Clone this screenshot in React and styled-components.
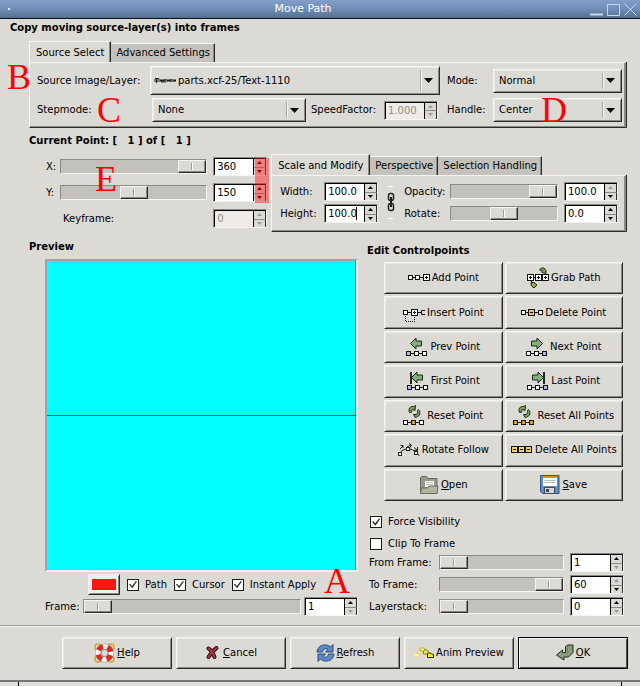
import React from "react";
import styled, { createGlobalStyle, css } from "styled-components";

const c = {
  bg: "#dcdad5",
  trough: "#c3c1bc",
  tab: "#c4c2bd",
  light: "#f5f4f2",
  mid: "#8b8984",
  dark: "#2a2a28",
};

const Global = createGlobalStyle`
  * { box-sizing: border-box; }
  body {
    margin: 0;
    background: ${c.bg};
    color: #000;
    font: 10px/12px "DejaVu Sans", sans-serif;
  }
  button, input, select { font: inherit; color: inherit; margin: 0; border-radius: 0; }
`;

const raised = css`
  border: 1px solid;
  border-color: ${c.light} ${c.dark} ${c.dark} ${c.light};
  box-shadow: inset 1px 1px #eae9e5, inset -1px -1px ${c.mid};
`;

/* ---------- window frame ---------- */

const Window = styled.div`
  position: relative;
  display: flex;
  flex-direction: column;
  min-height: 100vh;
  overflow: hidden;
`;

const TitleBar = styled.header`
  display: grid;
  grid-template-columns: auto 1fr auto;
  column-gap: 3px;
  align-items: center;
  height: 19px;
  padding: 0 3px 0 8px;
  border-bottom: 1px solid #0b1020;
  background: linear-gradient(#829fca, #7390ba 45%, #55708f);
  color: #fff;
`;

const Title = styled.h1`
  margin: 0;
  padding-left: 6px;
  text-align: center;
  font-size: 11px;
  line-height: 18px;
  font-weight: 400;
`;

const Dot = styled.span`
  width: 2px;
  height: 2px;
  background: #e6edf6;
`;

const WindowButtons = styled.div`
  display: flex;
  justify-content: flex-end;
  gap: 4px;
`;

const WindowButton = styled.button`
  display: flex;
  padding: 0;
  border: 0;
  background: none;
`;

const Heading = styled.h2`
  margin: 0;
  font-size: 10px;
  line-height: 12px;
  font-weight: 700;
`;

const PointHeading = styled(Heading)`
  padding-top: 7px;
`;

const Main = styled.main`
  display: flex;
  flex-direction: column;
  padding: 3px 14px 0 10px;
`;

const Body = styled.div`
  display: flex;
  flex-direction: column;
  padding: 7px 0 0 19px;
`;

/* ---------- notebook ---------- */

const Notebook = styled.section`
  display: flex;
  flex-direction: column;
`;

const Tabs = styled.div`
  display: flex;
  align-items: flex-end;
  height: 21px;
`;

const Tab = styled.button`
  height: ${(p) => (p.$active ? 22 : 19)}px;
  margin-bottom: ${(p) => (p.$active ? -1 : 0)}px;
  padding: 0 ${(p) => (p.$active ? 6 : 4)}px;
  border: 1px solid;
  border-color: ${c.light} ${c.dark} transparent ${(p) => (p.$active ? c.light : c.tab)};
  border-bottom: 0;
  background: ${(p) => (p.$active ? c.bg : c.tab)};
  box-shadow: inset -1px 0 ${c.mid};
  white-space: nowrap;
`;

const Panel = styled.div`
  display: flex;
  flex-direction: column;
  gap: 3px;
  padding: 3px 3px 5px 7px;
  border: 1px solid;
  border-color: ${c.light} ${c.mid} ${c.dark} ${c.light};
  box-shadow: inset -1px -1px ${c.mid}, 1px 0 ${c.dark};
`;

const Row = styled.div`
  display: flex;
  align-items: center;
  gap: ${(p) => p.$gap || 0}px;
`;

const Label = styled.label`
  flex: none;
  width: ${(p) => (p.$w ? p.$w + "px" : "auto")};
  white-space: nowrap;
`;

const Gap = styled.span`
  flex: none;
  width: ${(p) => p.$w}px;
`;

/* ---------- combo box ---------- */

const ComboFrame = styled.span`
  ${raised}
  display: grid;
  grid-template-columns: auto 1fr 19px;
  align-items: center;
  flex: ${(p) => (p.$w ? "none" : "1 1 0")};
  width: ${(p) => (p.$w ? p.$w + "px" : "auto")};
  min-width: 0;
  height: ${(p) => p.$h || 24}px;
  padding-left: ${(p) => p.$indent || 5}px;
`;

const ComboSelect = styled.select`
  grid-area: 1 / 2 / 2 / 4;
  width: 100%;
  height: 100%;
  padding: 0;
  border: 0;
  appearance: none;
  background: none;
  outline: none;
`;

const ComboArrow = styled.span`
  grid-area: 1 / 3;
  display: flex;
  align-items: center;
  height: calc(100% - 6px);
  padding-left: 3px;
  border-left: 1px solid #aaa8a3;
  box-shadow: inset 1px 0 ${c.light};
  pointer-events: none;
`;

const Combo = ({ id, w, h, indent, icon, value, options }) => (
  <ComboFrame $w={w} $h={h} $indent={indent}>
    {icon}
    <ComboSelect id={id} defaultValue={value}>
      {(options || [value]).map((o) => (
        <option key={o}>{o}</option>
      ))}
    </ComboSelect>
    <ComboArrow>
      <svg width="9" height="5" viewBox="0 0 9 5">
        <path d="M0 0h9L4.500 5z" />
      </svg>
    </ComboArrow>
  </ComboFrame>
);

/* ---------- spin box ---------- */

const SpinFrame = styled.span`
  display: grid;
  grid-template: 1fr 1fr / 1fr 12px;
  flex: none;
  width: 54px;
  height: 19px;
  border: 1px solid;
  border-color: ${c.mid} ${c.light} ${c.light} ${c.mid};
  color: ${(p) => (p.$off ? "#8f8d88" : "#000")};
`;

const SpinInput = styled.input`
  grid-area: 1 / 1 / 3 / 2;
  min-width: 0;
  width: 100%;
  padding: 0 0 0 2px;
  border: 1px solid #000;
  border-width: 1px 1px 0 1px;
  background: #fff;
  outline: none;
  &:disabled { background: #efebe7; color: #8f8d88; }
`;

const Caret = styled.span`
  grid-area: 1 / 1 / 3 / 2;
  place-self: center end;
  width: 1px;
  height: 13px;
  margin-right: 8px;
  background: #000;
  pointer-events: none;
`;

const SpinStep = styled.button`
  grid-area: ${(p) => (p.$down ? 2 : 1)} / 2;
  display: flex;
  align-items: center;
  justify-content: center;
  padding: 0;
  border: 0;
  border-top: 1px solid ${(p) => (p.$down ? c.mid : "#000")};
  border-right: 1px solid ${c.dark};
  background: ${c.bg};
  color: ${(p) => (p.$dim ? "#9c9a95" : "#000")};
`;

const Spin = ({ id, value, off, dimUp, dimDown, caret }) => (
  <SpinFrame $off={off}>
    <SpinInput id={id} type="text" defaultValue={value} disabled={off} />
    {caret && <Caret />}
    <SpinStep type="button" aria-label="Increase" $dim={off || dimUp}>
      <svg width="5" height="3" viewBox="0 0 5 3"><path d="M0 3h5L2.500 0z" fill="currentColor" /></svg>
    </SpinStep>
    <SpinStep type="button" aria-label="Decrease" $down $dim={off || dimDown}>
      <svg width="5" height="3" viewBox="0 0 5 3"><path d="M0 0h5L2.500 3z" fill="currentColor" /></svg>
    </SpinStep>
  </SpinFrame>
);

/* ---------- slider, check box ---------- */

const Slider = styled.input.attrs({ type: "range" })`
  flex: 1 1 0;
  min-width: 0;
  height: 15px;
  appearance: none;
  border: 1px solid;
  border-color: ${c.mid} ${c.light} ${c.light} ${c.mid};
  background: ${c.trough};
  outline: none;
  &::-webkit-slider-thumb {
    appearance: none;
    width: 28px;
    height: 13px;
    border: 1px solid;
    border-color: ${c.light} ${c.dark} ${c.dark} ${c.light};
    box-shadow: inset -1px -1px ${c.mid};
    background:
      linear-gradient(#9c9a95, #9c9a95) 12px 2px / 1px 7px no-repeat,
      linear-gradient(#fff, #fff) 13px 2px / 1px 7px no-repeat,
      ${c.bg};
  }
`;

const SliderFill = styled.span`
  display: flex;
  flex: 1 1 0;
  min-width: 0;
  padding-right: 6px;
`;

const Check = styled.input.attrs({ type: "checkbox" })`
  display: grid;
  place-items: center;
  flex: none;
  width: 12px;
  height: 12px;
  appearance: none;
  border: 1px solid #1c1c1a;
  background: #fff;
  &:checked::before {
    content: "";
    width: 8px;
    height: 8px;
    background: #333;
    clip-path: polygon(0 50%, 14% 38%, 38% 66%, 86% 6%, 100% 12%, 42% 96%);
  }
`;

const CheckLabel = styled.label`
  display: flex;
  align-items: center;
  gap: 6px;
  white-space: nowrap;
`;

/* ---------- point section ---------- */

const PointRow = styled.div`
  display: grid;
  grid-template-columns: minmax(0, 220fr) minmax(0, 353fr);
  gap: 4px;
  padding: 7px 0 0 17px;
`;

const PointGrid = styled.div`
  position: relative;
  display: grid;
  grid-template-columns: 14px minmax(0, 1fr) 54px;
  grid-template-rows: 19px 19px 19px;
  row-gap: 7px;
  align-content: start;
  align-items: center;
  padding-top: 3px;
`;

const KeyframeLabel = styled.label`
  grid-column: 1 / 3;
  padding-left: 17px;
`;

const Highlight = styled.span`
  position: absolute;
  top: 4px;
  right: -2px;
  width: 14px;
  height: 45px;
  background: rgba(255, 30, 30, 0.48);
  pointer-events: none;
`;

const ModifyPanel = styled(Panel)`
  flex-direction: row;
  align-items: center;
  gap: 9px;
  padding: 6px 7px 8px 8px;
`;

const Stack = styled.div`
  display: flex;
  flex-direction: column;
  gap: 3px;
  flex: ${(p) => (p.$grow ? "1 1 0" : "none")};
  min-width: 0;
`;

const ChainButton = styled.button`
  display: flex;
  padding: 0;
  border: 0;
  background: none;
`;

/* ---------- preview and control points ---------- */

const Columns = styled.div`
  display: grid;
  grid-template-columns: minmax(0, 328fr) minmax(0, 258fr);
  gap: 9px;
  padding-top: 9px;
`;

const PreviewArea = styled.div`
  display: flex;
  flex-direction: column;
  gap: 2px;
  padding: 6px 0 0 16px;
`;

const Canvas = styled.div`
  display: flex;
  flex-direction: column;
  justify-content: center;
  aspect-ratio: 1;
  border: 2px solid;
  border-color: #a5a39e #f0efec #f0efec #a5a39e;
  background: #00ffff;
  box-shadow: inset -1px 0 #8a6a6a;
`;

const CursorLine = styled.hr`
  width: 100%;
  height: 1px;
  margin: 0;
  border: 0;
  background: #f01010;
`;

const ColorButton = styled.button`
  ${raised}
  display: flex;
  width: 32px;
  height: 21px;
  padding: 4px 3px;
`;

const Swatch = styled.span`
  flex: 1;
  align-self: stretch;
  background: #ff1414;
`;

const PathOptions = styled.div`
  display: flex;
  align-items: center;
  gap: 7px;
  padding-left: 43px;
`;

const Controls = styled.div`
  display: flex;
  flex-direction: column;
  padding-top: 4px;
`;

const ButtonGrid = styled.div`
  display: grid;
  grid-template-columns: 1fr 1fr;
  grid-auto-rows: 1fr;
  gap: 2px;
  min-height: 239px;
  margin-top: 5px;
  padding: 0 3px 0 17px;
`;

const PushButton = styled.button`
  ${raised}
  display: flex;
  align-items: center;
  justify-content: center;
  gap: 2px;
  min-width: 0;
  min-height: 32px;
  padding: 0;
  background: ${c.bg};
  white-space: nowrap;
  ${(p) => p.$default && css`border-color: #000; box-shadow: inset 1px 1px ${c.light}, inset -1px -1px #555;`}
`;

const Checks = styled.div`
  display: flex;
  flex-direction: column;
  gap: 10px;
  padding: 15px 0 0 3px;
`;

const FrameRows = styled.div`
  display: flex;
  flex-direction: column;
  gap: 3px;
  padding: 3px 2px 0 2px;
`;

/* ---------- footer ---------- */

const Actions = styled.footer`
  display: grid;
  grid-template-columns: repeat(5, 1fr);
  gap: 4px;
  margin-top: 9px;
  padding: 11px 12px 11px 62px;
  border-top: 1px solid #a19f9a;
  box-shadow: inset 0 1px ${c.light};
`;

const BottomEdge = styled.div`
  display: flex;
  flex: 1;
  min-height: 4px;
  padding: 0 18px;
  border-top: 2px solid #777571;
  background: #e0deda;
`;

const BottomGrip = styled.span`
  flex: 1;
  border: 1px solid #000;
  border-width: 0 1px;
`;

const Mark = styled.span`
  position: absolute;
  left: ${(p) => p.$x}px;
  top: ${(p) => p.$y}px;
  color: #ff0000;
  font: 36px/36px "Liberation Serif", serif;
  pointer-events: none;
`;

/* ---------- icons ---------- */

const Node = ({ x, y, s = 5, fill = "#fff", sign }) => (
  <g fill="none" stroke="#111">
    <rect x={x + 0.5} y={y + 0.5} width={s - 1} height={s - 1} fill={fill} />
    {sign && <path d={`M${x + 2} ${y + s / 2}h${s - 4}` + (sign === "+" ? `M${x + s / 2} ${y + 2}v${s - 4}` : "")} />}
  </g>
);

const Chain3 = ({ y, fills = ["#fff", "#fff", "#fff"] }) => (
  <g>
    <path d={`M4 ${y + 2.5}h14`} stroke="#111" fill="none" />
    <Node x={0} y={y} fill={fills[0]} />
    <Node x={8} y={y} fill={fills[1]} />
    <Node x={16} y={y} fill={fills[2]} />
  </g>
);

const Icon = ({ w = 22, h = 20, children }) => (
  <svg width={w} height={h} viewBox={`0 0 ${w} ${h}`} aria-hidden="true">{children}</svg>
);

const AddIcon = () => (
  <Icon>
    <path d="M5 9.500h11" stroke="#111" />
    <Node x={0} y={7} /><Node x={7} y={7} /><Node x={15} y={6} s={7} sign="+" />
  </Icon>
);

const Swirl = ({ x = 0, y = 0 }) => (
  <g transform={`translate(${x} ${y})`} stroke="#1c2a14" strokeWidth="1" fill="#7f9c63">
    <path d="M1.500 7.500C0 4 2 1 5.500 1.500L7.500 0.500 7 5.500 4.500 4.500C3.500 5 3.500 6 4 7z" />
    <path d="M10.500 4.500C13 7 12 11.500 9 11.500L7.500 13 5.500 9.500 8.500 9.500C9.500 8.500 9.500 7 9.500 5.500z" />
  </g>
);

const GrabIcon = () => (
  <Icon h={22}>
    <path d="M3 10.500h16" stroke="#111" />
    <path d="M12.500 3L14.500 1h2.500l2 2.500v3l-4-1v-2z" fill="#7f9c63" stroke="#1c2a14" />
    <path d="M4.500 13v4" stroke="#1c2a14" />
    <path d="M4 15.500h3l3 2.500-3 3-2.500-2z" fill="#9aa840" stroke="#1c2a14" />
    <Node x={0} y={7} s={7} sign="+" /><Node x={8} y={7} s={7} sign="+" /><Node x={15} y={7} s={7} sign="+" />
  </Icon>
);

const InsertIcon = () => (
  <Icon>
    <path d="M5 9.500h13" stroke="#111" />
    <Node x={0} y={7} /><Node x={8} y={6} s={7} sign="+" />
    <path d="M22 7.500h-3.500v4H22" stroke="#111" fill="none" />
    <path d="M2.500 13v5.500h9V13" stroke="#111" fill="none" strokeDasharray="1 1" />
  </Icon>
);

const DeleteIcon = () => (
  <Icon>
    <path d="M5 9.500h12" stroke="#111" />
    <Node x={0} y={7} /><Node x={7} y={6} s={7} fill="#f0c050" sign="-" /><Node x={17} y={7} />
  </Icon>
);

const ArrowIcon = ({ flip, bar }) => (
  <Icon h={20}>
    <g transform={flip ? "translate(21 0) scale(-1 1)" : undefined}>
      <path d="M4.500 6.500L10 1V4h5.500v5H10v3z" fill="#86ad7c" stroke="#1c2a1c" />
      {bar && <path d="M4 1v12" stroke="#1c2a1c" strokeWidth="2" />}
    </g>
    <Chain3 y={14} fills={flip ? ["#fff", "#fff", "#b9b9e8"] : ["#b9b9e8", "#fff", "#fff"]} />
  </Icon>
);

const ResetIcon = ({ all }) => (
  <Icon h={21}>
    <Swirl x={5} y={0} />
    <Chain3 y={15} fills={all ? ["#e8a020", "#e8a020", "#e8a020"] : ["#fff", "#e8a020", "#fff"]} />
  </Icon>
);

const RotateIcon = () => (
  <Icon h={14}>
    <g fill="none" stroke="#222">
      <path d="M1.500 10.500C5 4.500 14 4.500 18 9.500l3.500 3" />
      <path d="M2 6l3-3M2.500 2.500H5V5M9 4l4-2M11 0.500l2.500 1.500L12 4.500M16 4.500l3 2.500M19.500 4v3.500H16" />
      <g fill="#fff">
        <rect x="0.500" y="9.500" width="3" height="3" />
        <rect x="8.500" y="4.500" width="3" height="3" />
        <rect x="16.500" y="8.500" width="3" height="3" />
      </g>
    </g>
  </Icon>
);

const DeleteAllIcon = () => (
  <Icon>
    <path d="M3 9.500h16" stroke="#111" />
    <Node x={0} y={6} s={7} fill="#f0d070" sign="-" /><Node x={7} y={6} s={7} fill="#f0d070" sign="-" /><Node x={14} y={6} s={7} fill="#f0d070" sign="-" />
  </Icon>
);

const OpenIcon = () => (
  <Icon w={20}>
    <path d="M1.500 18V2.500l1-1h5l1.500 2h9V18z" fill="#9a9a8a" stroke="#6b6b5e" />
    <path d="M5.500 5.500h10v7h-10z" fill="#fbfbf8" stroke="#9a9a92" />
    <path d="M7 7.500h7M7 9.500h7" stroke="#c4c4be" />
    <path d="M1.500 18.500l1-5.500h6l1.500-2h9l-1 7.500z" fill="#b4b4a4" stroke="#6b6b5e" />
  </Icon>
);

const SaveIcon = () => (
  <Icon w={20}>
    <path d="M0.500 0.500h18.500v18H2.500l-2-2z" fill="#5f8fc9" stroke="#2d5586" />
    <path d="M3 1h14v10H3z" fill="#fff" />
    <path d="M3 1h14v2H3z" fill="#f08a24" />
    <path d="M4.500 5.500h11M4.500 7.500h11" stroke="#bbb" />
    <path d="M4.500 12.500h10v6h-10z" fill="#d8d8d4" stroke="#445" />
    <path d="M6 14h3v3H6z" fill="#345" />
  </Icon>
);

const HelpIcon = () => (
  <Icon w={21}>
    <g fill="none" stroke="#d9a826" strokeWidth="1.500">
      <circle cx="4" cy="4" r="3" /><circle cx="17" cy="4" r="3" />
      <circle cx="4" cy="16" r="3" /><circle cx="17" cy="16" r="3" />
    </g>
    <circle cx="10.500" cy="10" r="6.500" fill="none" stroke="#8f8b88" strokeWidth="6" />
    <circle cx="10.500" cy="10" r="6.500" fill="none" stroke="#fff" strokeWidth="5" />
    <circle cx="10.500" cy="10" r="6.500" fill="none" stroke="#dc2a22" strokeWidth="5" strokeDasharray="5.600 4.610" strokeDashoffset="-2.300" />
    <circle cx="10.500" cy="10" r="3.500" fill={c.bg} stroke="#8f8b88" />
  </Icon>
);

const CancelIcon = () => (
  <Icon w={16}>
    <g fill="none" strokeLinecap="round">
      <path d="M3.500 5.500c2 1 5 5 6 8.500M11.500 5C8.500 7 5.500 10.500 3.500 14" stroke="#2a0a0c" strokeWidth="4" />
      <path d="M3.500 5.500c2 1 5 5 6 8.500M11.500 5C8.500 7 5.500 10.500 3.500 14" stroke="#a83a48" strokeWidth="2" />
    </g>
  </Icon>
);

const RefreshIcon = () => (
  <Icon w={19}>
    <g fill="#5b8ac6" stroke="#244a80" strokeLinejoin="round">
      <path d="M1 9C1.500 3.500 7 0.500 12 2.500L14.500 4l2.500-2.500V9h-7.500l2.500-2.500C9.500 5 7.500 5.500 6.500 9z" />
      <path d="M18 11C17.500 16.500 12 19.500 7 17.500L4.500 16l-2.500 2.500V11h7.500l-2.500 2.500c2.500 1.500 4.500 1 5.500-2.500z" />
    </g>
  </Icon>
);

const AnimIcon = () => (
  <Icon w={20} h={12}>
    <g strokeLinejoin="round">
      <path d="M0.500 7v3h5V7l-2-1z" fill="#fff7a8" stroke="#e6de98" />
      <path d="M3 4.500v2.500h4.500V4.500l-2-1z" fill="#fff27a" stroke="#d9cf80" />
      <path d="M6 1.500V4h4.500V1.500L8.500 0.500z" fill="#fdf060" stroke="#b9ae60" />
      <path d="M9.500 4V7H14V4l-2-1.500z" fill="#f6e640" stroke="#8a8030" />
      <path d="M13.500 6.500v4h6v-3l-2-0.500-1-1h-2z" fill="#fff000" stroke="#222" />
    </g>
  </Icon>
);

const OkIcon = () => (
  <Icon w={18}>
    <path d="M9.500 3.500l2.500-1.500h5v7.500l-4.500 4.500H8v3L0.500 12 6.500 7v2.500h3z" fill="#8a9d80" stroke="#222a1e" strokeLinejoin="round" />
    <path d="M11.500 4v6.500" fill="none" stroke="#6f8266" />
  </Icon>
);

const LayerThumb = () => (
  <svg width="24" height="5" viewBox="0 0 24 5" aria-hidden="true">
    <path d="M0 1h22v3H0z" fill="#777" />
    <path d="M1 .5h4M2.500 1v4M6 2.500h4M7 4h3M11 1v3.500M13 2.500h3M17 1v3M19 2.500h3" stroke="#1a1a1a" fill="none" />
  </svg>
);

const ChainIcon = () => (
  <svg width="8" height="33" viewBox="0 0 8 33">
    <path d="M1 .500h5M1 32.500h5" stroke="#fff" />
    <g fill="none" stroke="#222" strokeWidth="1.500">
      <rect x="1.500" y="7.500" width="5" height="7" rx="2" />
      <rect x="1.500" y="17.500" width="5" height="7" rx="2" />
      <path d="M4 11v10" strokeWidth="2" />
    </g>
  </svg>
);

const pointActions = [
  ["Add Point", <AddIcon />],
  ["Grab Path", <GrabIcon />],
  ["Insert Point", <InsertIcon />],
  ["Delete Point", <DeleteIcon />],
  ["Prev Point", <ArrowIcon />],
  ["Next Point", <ArrowIcon flip />],
  ["First Point", <ArrowIcon bar />],
  ["Last Point", <ArrowIcon flip bar />],
  ["Reset Point", <ResetIcon />],
  ["Reset All Points", <ResetIcon all />],
  ["Rotate Follow", <RotateIcon />],
  ["Delete All Points", <DeleteAllIcon />],
  ["Open", <OpenIcon />, true],
  ["Save", <SaveIcon />, true],
];

const dialogActions = [
  ["Help", <HelpIcon />, true],
  ["Cancel", <CancelIcon />, true],
  ["Refresh", <RefreshIcon />, true],
  ["Anim Preview", <AnimIcon />, false],
  ["OK", <OkIcon />, true],
];

const Action = ({ text, icon, mnemonic, isDefault }) => (
  <PushButton type="button" $default={isDefault}>
    {icon}
    <span>{mnemonic ? <><u>{text[0]}</u>{text.slice(1)}</> : text}</span>
  </PushButton>
);

export default function App() {
  return (
    <Window>
      <Global />
      <TitleBar>
        <Dot />
        <Title>Move Path</Title>
        <WindowButtons>
          <WindowButton aria-label="Minimize">
            <svg width="13" height="13" viewBox="0 0 13 13"><path d="M0 11.500h13" stroke="#c9d6ea" strokeWidth="2" /></svg>
          </WindowButton>
          <WindowButton aria-label="Maximize">
            <svg width="13" height="13" viewBox="0 0 13 13"><path d="M.500 1.500h12v11H.500z" fill="none" stroke="#c9d6ea" /></svg>
          </WindowButton>
          <WindowButton aria-label="Close">
            <svg width="13" height="13" viewBox="0 0 13 13"><path d="M.500.500l12 12M12.500.500l-12 12" stroke="#c9d6ea" /></svg>
          </WindowButton>
        </WindowButtons>
      </TitleBar>

      <Main>
        <Heading>Copy moving source-layer(s) into frames</Heading>
        <Body>
          <Notebook>
            <Tabs role="tablist">
              <Tab role="tab" aria-selected="true" $active>Source Select</Tab>
              <Tab role="tab" aria-selected="false">Advanced Settings</Tab>
            </Tabs>
            <Panel role="tabpanel">
              <Row>
                <Label htmlFor="source" $w={113}>Source Image/Layer:</Label>
                <Combo id="source" h={29} indent={3} icon={<LayerThumb />} value="parts.xcf-25/Text-1110" />
                <Gap $w={7} />
                <Label htmlFor="mode" $w={46}>Mode:</Label>
                <Combo id="mode" w={129} value="Normal" />
              </Row>
              <Row>
                <Label htmlFor="step" $w={115}>Stepmode:</Label>
                <Combo id="step" value="None" />
                <Gap $w={5} />
                <Label htmlFor="speed" $w={73}>SpeedFactor:</Label>
                <Spin id="speed" value="1.000" off />
                <Gap $w={9} />
                <Label htmlFor="handle" $w={46}>Handle:</Label>
                <Combo id="handle" w={129} value="Center" />
              </Row>
            </Panel>
          </Notebook>

          <PointHeading>Current Point: [&nbsp;&nbsp; 1 ] of [&nbsp;&nbsp; 1 ]</PointHeading>

          <PointRow>
            <PointGrid>
              <label htmlFor="px">X:</label>
              <SliderFill><Slider aria-label="X position" defaultValue={100} /></SliderFill>
              <Spin id="px" value="360" />
              <label htmlFor="py">Y:</label>
              <SliderFill><Slider aria-label="Y position" defaultValue={50} /></SliderFill>
              <Spin id="py" value="150" />
              <KeyframeLabel htmlFor="key">Keyframe:</KeyframeLabel>
              <Spin id="key" value="0" off />
              <Highlight />
            </PointGrid>
            <Notebook>
              <Tabs role="tablist">
                <Tab role="tab" aria-selected="true" $active>Scale and Modify</Tab>
                <Tab role="tab" aria-selected="false">Perspective</Tab>
                <Tab role="tab" aria-selected="false">Selection Handling</Tab>
              </Tabs>
              <ModifyPanel role="tabpanel">
                <Stack>
                  <Row><Label htmlFor="width" $w={44}>Width:</Label><Spin id="width" value="100.0" /></Row>
                  <Row><Label htmlFor="height" $w={44}>Height:</Label><Spin id="height" value="100.0" caret /></Row>
                </Stack>
                <ChainButton aria-label="Link width and height"><ChainIcon /></ChainButton>
                <Stack $grow>
                  <Row>
                    <Label htmlFor="opacity" $w={46}>Opacity:</Label>
                    <SliderFill><Slider aria-label="Opacity" defaultValue={100} /></SliderFill>
                    <Spin id="opacity" value="100.0" dimUp />
                  </Row>
                  <Row>
                    <Label htmlFor="rotate" $w={46}>Rotate:</Label>
                    <SliderFill><Slider aria-label="Rotate" defaultValue={50} /></SliderFill>
                    <Spin id="rotate" value="0.0" />
                  </Row>
                </Stack>
              </ModifyPanel>
            </Notebook>
          </PointRow>

          <Columns>
            <section>
              <Heading>Preview</Heading>
              <PreviewArea>
                <Canvas><CursorLine /></Canvas>
                <PathOptions>
                  <ColorButton aria-label="Path color"><Swatch /></ColorButton>
                  <CheckLabel><Check defaultChecked />Path</CheckLabel>
                  <CheckLabel><Check defaultChecked />Cursor</CheckLabel>
                  <CheckLabel><Check defaultChecked />Instant Apply</CheckLabel>
                </PathOptions>
                <Row $gap={3}>
                  <Label htmlFor="frame">Frame:</Label>
                  <Slider aria-label="Frame" defaultValue={0} />
                  <Spin id="frame" value="1" dimDown />
                </Row>
              </PreviewArea>
            </section>
            <Controls>
              <Heading>Edit Controlpoints</Heading>
              <ButtonGrid>
                {pointActions.map(([text, icon, mnemonic]) => (
                  <Action key={text} text={text} icon={icon} mnemonic={mnemonic} />
                ))}
              </ButtonGrid>
              <Checks>
                <CheckLabel><Check defaultChecked />Force Visibility</CheckLabel>
                <CheckLabel><Check />Clip To Frame</CheckLabel>
              </Checks>
              <FrameRows>
                <Row>
                  <Label htmlFor="from" $w={70}>From Frame:</Label>
                  <SliderFill><Slider aria-label="From frame" defaultValue={0} /></SliderFill>
                  <Spin id="from" value="1" dimDown />
                </Row>
                <Row>
                  <Label htmlFor="to" $w={70}>To Frame:</Label>
                  <SliderFill><Slider aria-label="To frame" defaultValue={100} /></SliderFill>
                  <Spin id="to" value="60" dimUp />
                </Row>
                <Row>
                  <Label htmlFor="layer" $w={70}>Layerstack:</Label>
                  <SliderFill><Slider aria-label="Layerstack" defaultValue={0} /></SliderFill>
                  <Spin id="layer" value="0" dimDown />
                </Row>
              </FrameRows>
            </Controls>
          </Columns>
        </Body>
      </Main>

      <Actions>
        {dialogActions.map(([text, icon, mnemonic]) => (
          <Action key={text} text={text} icon={icon} mnemonic={mnemonic} isDefault={text === "OK"} />
        ))}
      </Actions>
      <BottomEdge><BottomGrip /></BottomEdge>

      <Mark $x={7} $y={59}>B</Mark>
      <Mark $x={97} $y={92}>C</Mark>
      <Mark $x={541} $y={92}>D</Mark>
      <Mark $x={95} $y={161}>E</Mark>
      <Mark $x={324} $y={563}>A</Mark>
    </Window>
  );
}
